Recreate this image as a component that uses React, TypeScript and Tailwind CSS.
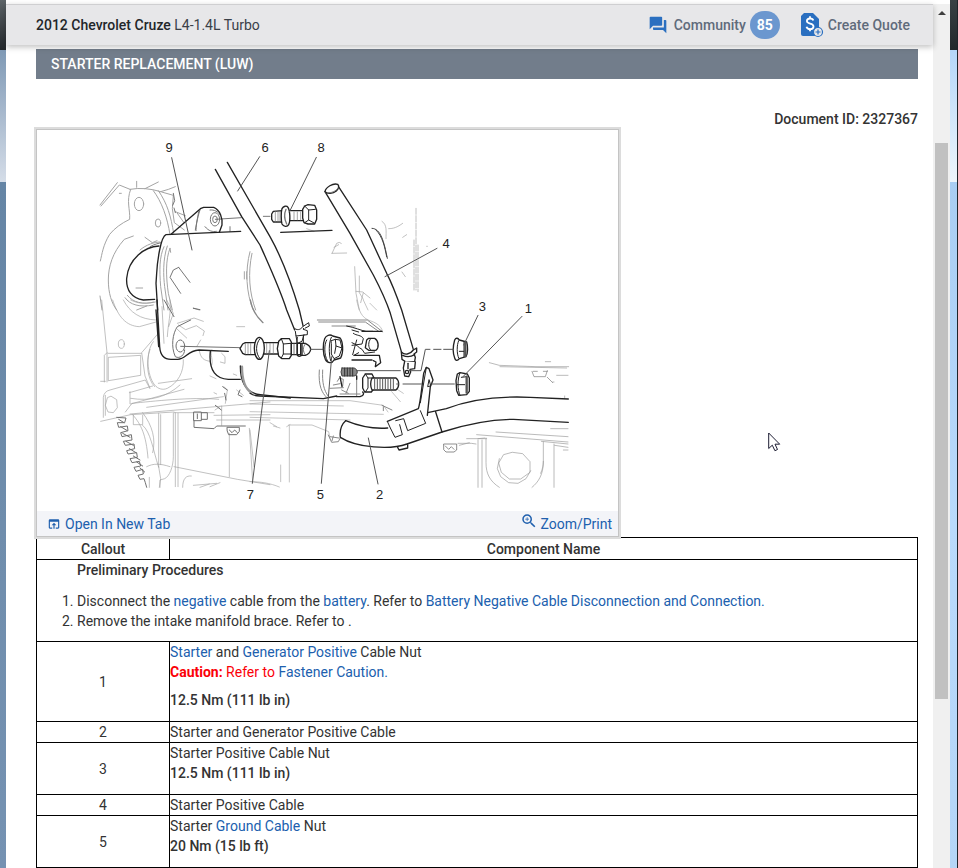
import type { ReactNode } from "react";
import { MdForum, MdOpenInBrowser, MdZoomIn } from "react-icons/md";

function Ref({ children }: { children: ReactNode }) {
  return (
    <a href="#" className="text-[#2060ae] hover:underline">
      {children}
    </a>
  );
}

const rows: { callout: string; body: ReactNode; torque?: string; caution?: boolean }[] = [
  {
    callout: "1",
    body: (
      <>
        <Ref>Starter</Ref> and <Ref>Generator Positive</Ref> Cable Nut
      </>
    ),
    torque: "12.5 Nm (111 lb in)",
    caution: true,
  },
  { callout: "2", body: "Starter and Generator Positive Cable" },
  { callout: "3", body: "Starter Positive Cable Nut", torque: "12.5 Nm (111 lb in)" },
  { callout: "4", body: "Starter Positive Cable" },
  {
    callout: "5",
    body: (
      <>
        Starter <Ref>Ground Cable</Ref> Nut
      </>
    ),
    torque: "20 Nm (15 lb ft)",
  },
];

const labels = [
  { n: "9", x: 396, y: 67 },
  { n: "6", x: 684, y: 67 },
  { n: "8", x: 852, y: 67 },
  { n: "4", x: 1227, y: 354 },
  { n: "3", x: 1336, y: 544 },
  { n: "1", x: 1474, y: 550 },
  { n: "7", x: 640, y: 1108 },
  { n: "5", x: 850, y: 1108 },
  { n: "2", x: 1028, y: 1108 },
];

function QuoteIcon() {
  return (
    <svg viewBox="0 0 24 26" className="h-[26px] w-6" aria-hidden>
      <path d="M4 1h9l6 6v15a2 2 0 0 1-2 2H3a2 2 0 0 1-2-2V4z" fill="#2a6fc0" />
      <path
        d="M13.3 8.6c-.4-1.4-1.6-2.1-3.2-2.1-1.9 0-3.2 1-3.2 2.6 0 3.5 6.6 1.7 6.600 5.3 0 1.7-1.4 2.7-3.4 2.7-1.8 0-3.2-.8-3.6-2.4M10 4.3v2.2M10 17v2.3"
        fill="none"
        stroke="#fff"
        strokeWidth="1.8"
      />
      <circle cx="18" cy="20" r="4.500" fill="#e7e7e9" stroke="#2a6fc0" strokeWidth="1.2" />
      <path d="M15.500 20h5M18 17.500v5" stroke="#2a6fc0" strokeWidth="1.2" />
    </svg>
  );
}

function StarterDiagram() {
  return (
    <svg
      viewBox="0 0 1743 1143"
      className="block w-full"
      fill="none"
      strokeLinecap="round"
      strokeLinejoin="round"
      role="img"
      aria-label="Starter motor exploded view"
    >
      {/* bell housing, upper left */}
      <g transform="translate(159 0)">
        <g stroke="#a4a4a4" strokeWidth="3">
          <path d="M30 225 82 158M33 228 88 165 120 178M140 154v18M165 176l40-20M88 190h6M212 185q24-6 44-15M120 178q44-8 92 7" />
          <path d="M122 178c-14 36-1 60-3 90q-38 18-60 45c-20 32-23 60-28 80M130 318l-27 10c-36 40-48 82-48 122 0 40 10 70 25 90M30 498l6 42" />
          <ellipse cx="147" cy="222" rx="14" ry="20" />
          <ellipse cx="204" cy="279" rx="8" ry="12" />
          <path d="M190 182c25 33 42 80 50 132M205 182c27 38 38 78 46 128M215 186l35 10-3 40 6 42 30 22M256 245l30 12M262 250l20 28M165 322l22 16 14-6M150 360c18-16 44-24 60-24M105 503c15 22 45 30 85 22M112 496c18 22 44 28 84 20M138 474h20M310 534l18 6M140 540l30-12" />
          <path d="M222 350c-14 30-14 70-10 120l10 70M232 348c-14 40-12 90-8 122l10 70M240 355c-14 34-12 86-5 135l12 50M240 355l2 12" />
          <path d="M480 365c-15 55-12 125 10 175M486 370c-13 60-8 120 11 170M463 425v22M470 425v22" />
        </g>
        <g stroke="#777" strokeWidth="3">
          <path d="m250 190 4 22-6 14M252 234l4 14M180 350c14-8 26-10 34-12M272 490l-32-48 10-22 16-8M266 412l34 45M326 245l-10 55M330 240c-10 30-12 50-12 62M345 290c12 14 22 16 34 14M420 290v14M360 240c12-2 26 6 30 14" />
          <ellipse cx="375" cy="268" rx="14" ry="20" />
          <ellipse cx="375" cy="268" rx="7" ry="10" />
          <path d="m376 268 78-5M520 259h20" />
        </g>
        <g stroke="#222" strokeWidth="4">
          <path d="M207 348c-42 2-92 37-97 97-2 35 15 60 50 65l34-2" />
          <path d="m243 313 90-78 8-3h30c20 8 27 33 25 53l-8 22" />
          <path d="M452 304 228 314c-16 6-26 80-28 116l-2 30 5 80" />
        </g>
      </g>

      {/* lower housing, ring gear and bracket */}
      <g transform="translate(159 510)">
        <g stroke="#a2a2a2" strokeWidth="2">
          <path d="m35 0 16 158-8 8v80M32 244h14M54 160h100M56 172l96-6v60l-96 16zM51 158v88M68 0c16 50 40 78 80 80l50-14M100 0c20 38 50 58 98 60M122 0c18 10 48 14 68 6" />
          <ellipse cx="94" cy="132" rx="9" ry="13" />
          <path d="M40 352v-60q2-18 20-22l106-30 14 26M32 364l90-20 130-8M46 346v-60" />
          <path d="m64 289 16 10 2 24-12 15-16-2-8-20 6-22z" />
          <path d="m205 100-50 58 10 70 14 34M190 125c-24 30-20 100 4 130 10 12 24 16 38 10 32-16 50-50 48-86M180 148c-14 40-8 90 14 112M120 275v36M118 278l70-20M122 295c60 10 108-4 148-40M122 312l160-44M106 336l20-26c60-6 180-20 260-12M170 322l230-32M252 338h120M120 342l420-36M205 250l100-14" />
          <path d="M206 340v160M212 344v150M250 340v130c0 30-12 60-26 66l-14 4v22M256 338v222M264 340v220M170 500c20-10 40-10 70 0M252 500l190 38 98 16M178 532v30M278 562c0-26 10-36 26-34M206 500l6 36-4 26M310 556l70-6M330 562l28-10M360 560l30-12" />
          <path d="M158 338c30 40 40 80 30 120M128 344c26 30 40 60 46 130M130 346v28h28v-28M158 376c24 20 30 70 48 126M418 400v130M478 385l10 160M395 318v58" />
          <path d="M365 150c-6 14 6 30 0 46M395 160l10 10v20l-14-4M328 152c4 22 12 30 34 32M360 228l18 8M402 260l10 10-6 40M372 278l8 4M430 222l10 4M440 270l20 16M380 360h160M372 346l168-2M375 330l15-10M230 0l20 40-14 40M262 70l50-16 28 10M265 75l22 14 32-12 24 16-4 14M320 140l12-20" />
          <path d="M240 0c4 40-6 70-8 110M216 20l6 110M262 88l28 26M440 80h24" />
        </g>
        <g stroke="#707070" strokeWidth="3">
          <path d="m80 352 28 2-4 14-22 0 4 14 26-4 2 14-22 6 4 12 28-6 2 16-26 4 6 12 26-4 2 14-24 6 4 10 26-4 2 14-22 4 6 12 22-4 4 14-20 4 6 12 20-6 2 14-16 4 6 12 12-2 4 12 4 14" />
          <path d="m86 358 16 10M92 380l20 12M98 400l22 12M108 424l22 12M118 446l20 12M130 468l20 12M140 486l18 12M150 504l14 12" />
          <path d="M312 336h22v26h-22zM334 338h18v20h-18M312 362v20l60 4 8-8h86M322 342v14M412 382h36v12l-8 10h-24l-4-10zM418 390l8 8 8-8 8 8" />
          <path d="M302 60l-40 20c-14 20-20 60-6 90 14 8 28-6 28-20M310 25l20 4M222 0l30 50" />
          <ellipse cx="271" cy="138" rx="13" ry="18" />
          <path d="m272 139 180 4M398 260l14 10M404 280l4 20M450 270l-6 14 12 6M376 316l18 14" />
        </g>
        <g stroke="#222" strokeWidth="4">
          <path d="m201 0 8 140c2 28 14 38 34 38h20c26 0 28-26 64-28l88 4M198 30l8 110" />
          <path d="M361 154c-6 62 20 82 54 84h36M451 198c0 60 24 82 60 86l90 10" />
          <path d="M481 0c4 24 18 50 38 68" stroke="#888" />
          <path d="M456 200c0 40 10 66 28 78" stroke="#999" strokeWidth="7" />
        </g>
      </g>

      {/* starter body, right end */}
      <g transform="translate(669 0)">
        <g stroke="#a2a2a2" strokeWidth="2">
          <path d="m216 370 14-30q8-6 14 0M222 352l14-8M216 370l44-1M366 274c16 10 12 30 12 52M386 296c14 0 26-4 42-16M428 322l12-8M284 410l4 80 10 50M298 438v50l12 20M288 484l20 2 22 18M310 488l-8 30M426 426l10 14M140 296l22 8" />
          <path d="M468 235v245M474 345v140M462 330v150" strokeDasharray="18 4" />
          <path d="M500 349h2" />
        </g>
        <path d="m62 307 154-6" stroke="#222" strokeWidth="4" />
        <path d="M336 295c26 0 36 40 46 90M348 300c20 20 26 50 32 80" stroke="#444" strokeWidth="3" />
      </g>

      {/* lower engine block */}
      <g transform="translate(639 510)">
        <g stroke="#a8a8a8" strokeWidth="2">
          <path d="M0 302h300l100 14 14 20M0 312l280 6M0 335l400 8M0 352l300 8M60 368l20 12M116 375h70l50 20 4 20M118 378v168M92 495v50M0 545c30 0 60 4 88 16M0 390l12 110M110 380l10-6M90 384l-20-6M320 0c6 30 14 54 40 62 30 10 36 24 38 34M340 0l14 30M360 10l20 20M430 260l30 20M425 275l26 30" />
        </g>
        <g stroke="#888" strokeWidth="3">
          <path d="M235 405l10 22 20-2 8-16M240 410l26 4M250 408l-4 14M202 60h150l44 34M206 66h140l40 28M246 78h70M208 210c-4 50 10 70 20 80M218 210c-2 40 4 60 16 78M250 255l20-4M240 265l40-2M290 225l30 2v60M300 250l-12 30M396 316l30 14M400 320v12" />
          <path d="M262 244l6-10 12 4-2 20M270 282h60M275 270l20 10" />
        </g>
        <path d="M0 280c8 6 18 8 30 8l190 8 40-8" stroke="#222" strokeWidth="4" />
      </g>

      {/* block to the right */}
      <g transform="translate(1089 630)" stroke="#999" strokeWidth="2">
        <path d="m268 68 30 8 110 4h98M300 80l200 4M436 65h16M470 106h34M458 126h4" />
        <path d="m396 94 6 16h34l6-18M400 94h12M430 94h12M442 112l16 16" stroke="#777" />
        <path d="M494 168v8M288 276l216 14M452 266h52M200 296h60M230 284l274 22M424 304l80 8M464 316l40 6M490 330h14" />
        <path d="M234 300v142M246 300v142M258 294v74c0 34 12 56 40 74M430 306v60c0 36-14 60-34 76M422 400c6-14 8-24 8-36M462 312v130" />
        <path d="m338 337 30 4 22 24v32l-28 20h-34l-24-20-8-28 14-24z" />
        <path d="m298 356-6 30 10 24 24 18 28 2 24-14 14-24" />
        <path d="M174 310h40l14 2M178 316l30-8M234 296l20-2" />
        <path d="M132 312h38v18l-8 6h-24l-6-6zM136 318l10 10 8-8 8 8" stroke="#555" />
      </g>

      {/* cable 6 */}
      <path
        d="M535 118 614 260 669 345C705 425 730 480 749 540L773 600 800 590 787 540C760 450 730 375 699 320L571 97Z"
        fill="#fff"
      />
      <g stroke="#222" strokeWidth="4">
        <path d="M535 118 614 260 669 345C705 425 730 480 749 540L773 600" />
        <path d="M571 97 699 320C730 375 760 450 787 540L800 595" />
      </g>
      <g transform="translate(639 510)" stroke="#222" strokeWidth="3">
        <path d="M132 84c8 8 20 6 26-4l18-12 2 10-12 6M136 94l2 14 34-4v-12l-12-4M138 108l4 22 14-6 6-20" fill="#fff" />
        <path d="M142 112l-2 24M160 106v30" />
      </g>

      {/* cable 4 */}
      <path
        d="M864 185 939 310 1009 435C1030 475 1050 520 1060 550L1094 665 1129 655 1094 540C1080 500 1065 460 1049 430L989 300 906 172Z"
        fill="#fff"
      />
      <g stroke="#222" strokeWidth="4">
        <path d="M864 185 939 310 1009 435C1030 475 1050 520 1060 550L1094 668" />
        <path d="M906 172 989 300 1049 430C1065 460 1080 500 1094 540L1129 658" />
        <path d="M864 185c2-14 24-26 38-22 6 6 2 14-4 20-10 8-28 10-34 2z" fill="#fff" />
      </g>
      <path d="M872 188c10 2 24-4 32-14" stroke="#777" strokeWidth="3" />
      <g transform="translate(639 510)" stroke="#222" strokeWidth="4">
        <path d="M454 156c10 10 26 8 36-6l10-6 0 12-8 6 4 10-2 12-26 2-12-8z" fill="#fff" />
        <path d="M458 166c12 6 26 4 36-2M464 184l-4 20 4 24 12 2 6-14-2-8 14-2 2-20" fill="#fff" />
        <path d="M474 190v16" />
        <circle cx="471" cy="216" r="5" />
      </g>

      {/* bolt 8 */}
      <g transform="translate(669 0)" stroke="#222" strokeWidth="4" fill="#fff">
        <path d="m40 244-5 8v16l5 8h28v-34z" />
        <path d="M46 244v32M54 244v32M60 244v32" stroke="#777" strokeWidth="2" />
        <path d="M88 242h46v30H88z" />
        <path d="M102 246v24M112 246v24M122 246v24" stroke="#777" strokeWidth="2" />
        <path d="M66 236c4-8 14-10 18-4 6 10 8 40 2 52-4 8-16 6-20-2-3-10-3-36 0-46z" />
        <path d="M78 238c-6 14-4 32 2 44" fill="none" stroke="#777" />
        <path d="m134 228 10-4 20 2 6 14v28l-6 14-20 0-12-4-4-14v-26z" />
        <path d="M134 228l12 12 20-2M146 240v30l-12 8M146 270l18 10" fill="none" strokeWidth="3" />
      </g>

      {/* stud 7 */}
      <g transform="translate(639 510)" stroke="#222" strokeWidth="4" fill="#fff">
        <path d="m-14 128-8 4-8 14 8 14 8 4h34v-36z" />
        <path d="M-14 130v32M-6 130v32M2 130v32" stroke="#777" strokeWidth="2" />
        <path d="M36 128h50v34H36z" />
        <path d="M50 130v30M60 130v30M70 130v30" stroke="#777" strokeWidth="2" />
        <ellipse cx="28" cy="145" rx="15" ry="33" />
        <path d="M30 116c-14 16-14 44 0 60" fill="none" strokeWidth="3" />
        <path d="m86 124 8-8 24 0 6 10v40l-6 10-22 0-10-8-4-22z" />
        <path d="m94 116 6 16 22-2M100 132v30l-6 12M100 162l22 0" fill="none" strokeWidth="3" />
        <path d="M124 130h28v34h-28zM152 130h14c8 4 16 10 16 18s-8 16-16 18h-14z" />
        <path d="M132 132v30M140 132v30M166 132c-8 8-8 24 0 32" fill="none" stroke="#777" strokeWidth="3" />
        <path d="M142 130v36q6 6 14 0v-36" fill="none" />
      </g>

      {/* nut 5, terminals */}
      <g transform="translate(639 510)" stroke="#222" strokeWidth="4" fill="#fff">
        <path d="M224 116c4-10 16-14 24-8l22 6c8 8 12 40 2 60l-20 6c-6 12-20 10-26-2-8-18-8-46-2-62z" />
        <path d="M230 120c-8 14-8 44 2 62M244 112c-8 14-8 50-2 70M244 122l12-4 14 2 6 24-8 24-16 8-8-14v-30zM256 118l2 20-4 22M258 138l18 6" fill="none" strokeWidth="3" />
        <path d="M290 78c24 4 44 14 58 16l20 0M306 90l20 6M310 100c10 8 24 4 30 16l-4 16-30 4M306 128c14 4 20 16 30 20l8 12 30-4M320 120l-12 44M326 158l-14 8" fill="none" strokeWidth="3" />
        <path d="M336 94h60M312 166h76l4 22-16 12 2-14-8-4M306 180h60" fill="none" strokeWidth="4" />
        <path d="m350 120 6-5h18c12 6 14 28 4 36l-22 0-10-8z" />
        <path d="M362 116c-8 10-8 26 0 34" fill="none" strokeWidth="3" />
        <path d="M276 204h38q8 6 8 12t-8 12h-38q-6-12 0-24z" fill="#888" stroke="#444" strokeWidth="3" />
        <path d="M284 204v24M292 204v24M300 204v24M308 204v24" stroke="#333" strokeWidth="3" />
        <path d="m346 222 20 0 6 12v32l-8 10h-20l-6-12v-30z" />
        <path d="M346 222l8 12v30l-8 12M354 234h16" fill="none" strokeWidth="3" />
        <path d="M366 234h72q8 6 8 18t-8 18h-72q-8-18 0-36z" />
        <path
          d="M374 236v32M382 236v32M390 236v32M398 236v32M406 236v32M414 236v32M422 236v32M430 236v32"
          stroke="#555"
          strokeWidth="3"
        />
        <path d="M260 290l70 0c10-4 14-8 8-14M270 230l6 30M320 228v10" fill="none" />
      </g>

      {/* nuts 3 and 1 */}
      <g transform="translate(1089 180)" stroke="#222" strokeWidth="4" fill="#fff">
        <path d="M164 450c4-8 10-6 14 0l22 6c4 12 4 36-2 44l-20 6c-6 8-12 6-14-2-6-16-4-40 0-54z" />
        <path d="M176 452c-6 14-6 38 0 52M178 484h14M192 456v44" fill="none" strokeWidth="3" />
        <path d="M196 458v40" stroke="#555" strokeWidth="7" />
      </g>
      <g transform="translate(1089 630)" stroke="#222" strokeWidth="4" fill="#fff">
        <path d="m172 102 8-4 22 4 6 12v40l-8 10-24 2-6-14-2-30z" />
        <path d="M180 98c-8 20-8 50 0 68M184 112l16-2M172 134h22" fill="none" strokeWidth="3" />
        <path d="M200 110v48" stroke="#555" strokeWidth="7" />
      </g>

      {/* cable 2 with its bracket */}
      <g stroke="#222" strokeWidth="4">
        <path
          d="M926 872C910 886 908 904 910 922C960 954 1060 960 1110 942L1215 906C1290 882 1360 868 1430 868L1594 877V807L1480 802C1390 798 1300 808 1228 836C1200 848 1180 850 1171 848L1055 868 1050 892C1000 898 960 884 926 872Z"
          fill="#fff"
          stroke="none"
        />
        <path d="M926 872C910 886 908 904 910 922C960 954 1060 960 1110 942L1215 906C1290 882 1360 868 1430 868L1594 877" />
        <path d="M926 872C960 886 1000 898 1052 894M1594 807L1480 802C1390 798 1300 808 1228 836L1172 848M1196 846L1215 906" />
        <path d="M1051 874 1144 836C1150 820 1152 790 1160 730L1168 712 1176 716 1188 750 1180 770 1171 856" fill="#fff" />
        <path d="M1051 874 1060 894 1074 922 1096 914 1088 884M1076 872 1100 866 1112 902 1166 880 1150 842" strokeWidth="3" />
        <path d="M1168 712l-18 106M1176 750l-4 20 8-2z" strokeWidth="3" />
        <path d="M1082 952l4 8 26-6v-10" />
      </g>

      {/* leader lines */}
      <g stroke="#555" strokeWidth="3">
        <path d="M404 83 465 360M668 80 602 183M838 82 757 246M1200 355 1044 440M1323 556 1280 645M1455 559 1278 740" />
        <path d="M697 662 646 1060M884 680 853 1060M994 924 1023 1062" />
        <path d="M820 658h38M960 722h130M1085 762h-6M1116 722h36l13-64h14M1190 658h22M1220 658h30M1098 762h55M1184 762h68" />
      </g>

      <g fill="#222" fontFamily="Liberation Sans, sans-serif" fontSize="39" textAnchor="middle">
        {labels.map((l) => (
          <text key={l.n} x={l.x} y={l.y}>
            {l.n}
          </text>
        ))}
      </g>
    </svg>
  );
}

function Header() {
  return (
    <header className="relative z-20 flex h-[41px] shrink-0 items-center justify-between border-t border-[#cfcfd1] bg-[#e7e7e9] pr-[23px] pb-px pl-[30px] shadow-[0_2px_6px_rgba(0,0,0,0.25)]">
      <h1 className="text-[#3a4048]">
        <span className="font-medium text-[#222629]">2012 Chevrolet Cruze</span> L4-1.4L Turbo
      </h1>
      <nav className="flex items-center gap-5 font-medium text-[#5f6b7b]">
        <a href="#" className="flex items-center gap-1">
          <MdForum className="mr-0.5 size-5 text-[#2a6fc0]" aria-hidden />
          Community
          <span className="flex h-7 w-[30px] items-center justify-center rounded-full bg-[#6b97cf] font-bold text-white">
            85
          </span>
        </a>
        <a href="#" className="flex items-center gap-1">
          <QuoteIcon />
          Create Quote
        </a>
      </nav>
    </header>
  );
}

function Scrollbar() {
  return (
    <div className="flex w-[17px] shrink-0 flex-col bg-[#f0f0f0]" aria-hidden>
      <div className="flex h-[17px] items-center justify-center">
        <span className="border-x-4 border-b-4 border-x-transparent border-b-[#404040]" />
      </div>
      <div className="grow-[122]" />
      <div className="mx-0.5 grow-[556] bg-[#c1c1c1]" />
      <div className="grow-[169]" />
    </div>
  );
}

export default function App() {
  return (
    <div className="flex h-screen overflow-hidden bg-white font-[Roboto,sans-serif] text-sm leading-5 text-[#333]">
      <div className="flex w-1.5 shrink-0 flex-col" aria-hidden>
        <div className="h-[50px] bg-linear-to-b from-[#5d6468] to-[#24282c]" />
        <div className="h-[132px] bg-linear-to-b from-[#7f99b5] to-[#d5dde8]" />
        <div className="grow bg-linear-to-b from-[#6585a5] via-[#6f8dac] to-[#7592b2]" />
      </div>

      <div className="flex min-w-0 grow flex-col pt-1">
        <div className="flex min-h-0 grow">
          <div className="flex min-w-0 grow flex-col">
            <Header />
            <main className="min-h-0 grow overflow-hidden pt-1 pr-[15px] pl-[30px]">
              <h2 className="flex h-[30px] items-center bg-[#727d8b] pl-[15px] font-medium text-white">
                STARTER REPLACEMENT (LUW)
              </h2>
              <p className="mt-[30px] text-right font-medium">Document ID: 2327367</p>

              <figure className="relative z-10 w-[583px] max-w-full border border-[#c4c4c4] bg-white shadow-[0_0_0_2px_#dcdcdc]">
                <StarterDiagram />
                <figcaption className="flex h-[25px] items-center justify-between bg-[#f3f4f8] pr-1.5 pl-2.5">
                  <a href="#" className="flex items-center gap-1 text-[#2060ae]">
                    <MdOpenInBrowser className="size-[14px]" aria-hidden />
                    Open In New Tab
                  </a>
                  <a href="#" className="flex items-center gap-0.5 text-[#2060ae]">
                    <MdZoomIn className="mb-1.5 size-[18px]" aria-hidden />
                    Zoom/Print
                  </a>
                </figcaption>
              </figure>

              <table className="w-full border-collapse border border-black">
                <thead>
                  <tr className="h-[22px]">
                    <th className="w-[133px] border border-black p-0 font-medium">Callout</th>
                    <th className="border border-black p-0 font-medium">Component Name</th>
                  </tr>
                </thead>
                <tbody>
                  <tr>
                    <td colSpan={2} className="border border-black p-0 pb-2.5 pl-10">
                      <h3 className="font-medium">Preliminary Procedures</h3>
                      <ol className="mt-[11px] list-decimal">
                        <li>
                          Disconnect the <Ref>negative</Ref> cable from the <Ref>battery</Ref>. Refer to{" "}
                          <Ref>Battery Negative Cable Disconnection and Connection.</Ref>
                        </li>
                        <li>Remove the intake manifold brace. Refer to .</li>
                      </ol>
                    </td>
                  </tr>
                  {rows.map((row) => (
                    <tr key={row.callout}>
                      <td className="border border-black p-0 text-center">{row.callout}</td>
                      <td className="border border-black p-0">
                        <p>{row.body}</p>
                        {row.caution && (
                          <p className="mb-2 text-[#fb0007]">
                            <b className="font-bold">Caution:</b> Refer to <Ref>Fastener Caution.</Ref>
                          </p>
                        )}
                        {row.torque && <p className="mb-[11px] font-medium">{row.torque}</p>}
                      </td>
                    </tr>
                  ))}
                </tbody>
              </table>
            </main>
          </div>
          <Scrollbar />
        </div>
      </div>

      <div className="flex w-2 shrink-0 flex-col border-r border-[#20242a]" aria-hidden>
        <div className="h-[50px] bg-linear-to-b from-[#3a4145] to-[#22282b]" />
        <div className="h-[132px] bg-linear-to-b from-[#b4d6f8] to-[#edf5fc]" />
        <div className="grow bg-linear-to-b from-[#a9cdf3] via-[#b9dafc] to-[#b4d5f7]" />
      </div>

      {/* mouse pointer */}
      <svg viewBox="0 0 13 20" className="absolute top-[432px] left-[768px] z-30 h-5 w-[13px]" aria-hidden>
        <path
          d="M.7 1v15.5l3.6-3.3 2.6 5.5 2.6-1.2-2.5-5.3h4.7z"
          fill="#fff"
          stroke="#1d1d33"
          strokeWidth="1"
        />
      </svg>
    </div>
  );
}
